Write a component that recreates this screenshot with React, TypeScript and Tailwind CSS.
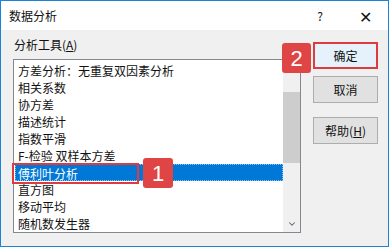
import { ChevronDown, ChevronUp } from 'lucide-react';

const tools = [
  '方差分析：无重复双因素分析',
  '相关系数',
  '协方差',
  '描述统计',
  '指数平滑',
  'F-检验 双样本方差',
  '傅利叶分析',
  '直方图',
  '移动平均',
  '随机数发生器',
];

const font = { fontFamily: '"Microsoft YaHei", "Noto Sans CJK SC", "Liberation Sans", sans-serif' };

export default function App() {
  return (
    <div
      className="relative w-[389px] h-[247px] border border-[#1883d7] bg-[#f0f0f0] flex flex-col overflow-hidden text-[12px] text-[#111]"
      style={font}
    >
      {/* Title bar */}
      <div className="h-[29px] bg-white flex items-center pl-[8px] shrink-0">
        <span className="flex-1">数据分析</span>
        <span className="w-[44px] text-center">?</span>
        <span className="w-[46px] text-center text-[16px] font-light leading-none">✕</span>
      </div>

      {/* Body */}
      <div className="flex flex-1 pl-[12px] pt-[7px]">
        {/* Left column */}
        <div className="flex flex-col">
          <div className="h-[16px] leading-[16px] pl-[1px]">
            分析工具(<span className="underline">A</span>)
          </div>
          <div className="mt-[6px] w-[288px] h-[174px] border border-[#828790] bg-white flex">
            <div className="flex-1 pt-[2px] pl-[1px]">
              {tools.map((t, i) => (
                <div
                  key={t}
                  className={
                    i === 6
                      ? 'h-[17px] leading-[17px] pl-[2px] bg-[#0078d7] text-white border border-dotted border-[#8fbfea] leading-[15px]'
                      : 'h-[17px] leading-[17px] pl-[3px]'
                  }
                >
                  {t}
                </div>
              ))}
            </div>
            <div className="w-[17px] bg-[#f0f0f0] flex flex-col items-center">
              <div className="h-[17px] flex items-center justify-center text-[#606060]">
                <ChevronUp size={10} strokeWidth={2} />
              </div>
              <div className="mt-[15px] w-[17px] h-[71px] bg-[#cdcdcd]" />
              <div className="flex-1" />
              <div className="h-[17px] flex items-center justify-center text-[#606060]">
                <ChevronDown size={10} strokeWidth={2.5} />
              </div>
            </div>
          </div>
        </div>

        {/* Buttons */}
        <div className="ml-[12px] mt-[5px] flex flex-col">
          <button className="w-[65px] h-[27px] border-2 border-[#e0393e] bg-[#e5f1fb]">确定</button>
          <button className="mt-[7px] w-[65px] h-[27px] border border-[#adadad] bg-[#e1e1e1]">取消</button>
          <button className="mt-[14px] w-[65px] h-[27px] border border-[#adadad] bg-[#e1e1e1]">
            帮助(<span className="underline">H</span>)
          </button>
        </div>
      </div>

      {/* Annotations */}
      <div className="absolute left-[11px] top-[162px] w-[127px] h-[21px] border-2 border-[#e0393e]" />
      <div className="absolute left-[142px] top-[157px] w-[30px] h-[30px] rounded-[3px] bg-[#e04545] text-white text-[22px] flex items-center justify-center" style={{ fontFamily: '"Liberation Sans", sans-serif' }}>
        1
      </div>
      <div className="absolute left-[281px] top-[42px] w-[29px] h-[30px] rounded-[3px] bg-[#e04545] text-white text-[22px] flex items-center justify-center" style={{ fontFamily: '"Liberation Sans", sans-serif' }}>
        2
      </div>
    </div>
  );
}
